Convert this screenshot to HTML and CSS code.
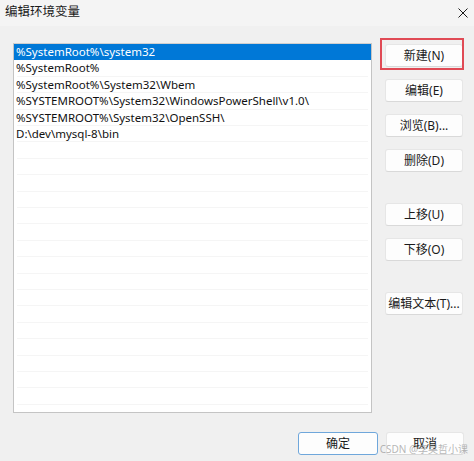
FILE: index.html
```html
<!DOCTYPE html>
<html lang="zh-CN">
<head>
<meta charset="utf-8">
<title>编辑环境变量</title>
<link rel="stylesheet" href="styles.css">
</head>
<body>
<div class="dialog">
  <div class="titlebar">
    <span class="title">编辑环境变量</span>
    <svg class="close" width="10" height="10" viewBox="0 0 10 10"><path d="M0.5 0.5 L9.5 9.5 M9.5 0.5 L0.5 9.5" stroke="#1a1a1a" stroke-width="1" fill="none"/></svg>
  </div>
  <div class="content">
    <div class="list">
      <div class="row selected">%SystemRoot%\system32</div>
      <div class="row">%SystemRoot%</div>
      <div class="row">%SystemRoot%\System32\Wbem</div>
      <div class="row">%SYSTEMROOT%\System32\WindowsPowerShell\v1.0\</div>
      <div class="row">%SYSTEMROOT%\System32\OpenSSH\</div>
      <div class="row">D:\dev\mysql-8\bin</div>
    </div>
    <div class="buttons">
      <button class="btn highlighted">新建(N)</button>
      <button class="btn">编辑(E)</button>
      <button class="btn">浏览(B)...</button>
      <button class="btn">删除(D)</button>
      <button class="btn group-start">上移(U)</button>
      <button class="btn">下移(O)</button>
      <button class="btn group-start">编辑文本(T)...</button>
    </div>
  </div>
  <div class="footer">
    <button class="btn primary">确定</button>
    <button class="btn">取消</button>
    <span class="watermark">CSDN @李昊哲小课</span>
  </div>
</div>
</body>
</html>
```

FILE: styles.css
```css
html, body {
  margin: 0;
  padding: 0;
}
body {
  background: #f0f0f0;
  font-family: "Noto Sans", "Noto Sans CJK SC", sans-serif;
  font-size: 12px;
  color: #1a1a1a;
}
.dialog {
  width: 474px;
  height: 461px;
  display: flex;
  flex-direction: column;
  position: relative;
  overflow: hidden;
}
.titlebar {
  height: 26px;
  display: flex;
  align-items: center;
  justify-content: space-between;
  padding: 0 6px 2px 5px;
  box-sizing: border-box;
  background: #f4f4f4;
}
.title {
  font-size: 12.5px;
  line-height: 16px;
  color: #1a1a1a;
}
.close {
  display: block;
  margin-top: 2px;
}
.content {
  display: flex;
  gap: 13px;
  padding: 17px 0 0 13px;
}
.list {
  width: 359px;
  height: 370px;
  box-sizing: border-box;
  border: 1px solid #c4c4c4;
  border-top-color: #cfcfcf;
  background-color: #ffffff;
  background-image: repeating-linear-gradient(to bottom, transparent 0, transparent 15.4px, #f5f5f5 15.4px, #f5f5f5 16.4px);
  background-size: calc(100% - 6px) 100%;
  background-position: 3px 0;
  background-repeat: no-repeat;
}
.row {
  height: 16.4px;
  line-height: 16.4px;
  padding-left: 2px;
  white-space: nowrap;
  font-size: 11.5px;
  color: #111;
}
.row.selected {
  background: #0078d7;
  color: #ffffff;
}
.buttons {
  display: flex;
  flex-direction: column;
  gap: 12px;
  padding-top: 1px;
  width: 78px;
}
.btn {
  font-family: "Noto Sans", "Noto Sans CJK SC", sans-serif;
  font-size: 12px;
  color: #1a1a1a;
  height: 23px;
  width: 78px;
  padding: 0;
  background: #fdfdfd;
  border: 1px solid #e6e6e6;
  border-bottom-color: #d9d9d9;
  border-radius: 3px;
  box-sizing: border-box;
  line-height: 20px;
  position: relative;
}
.btn.group-start {
  margin-top: 19px;
}
.btn.highlighted::after {
  content: "";
  position: absolute;
  left: -6px;
  right: -2px;
  top: -7px;
  bottom: -4px;
  border: 2px solid #e04a55;
}
.footer {
  display: flex;
  justify-content: flex-end;
  gap: 8px;
  padding: 19px 10px 0 0;
  position: relative;
}
.btn.primary {
  width: 80px;
  border: 1px solid #6fa7db;
  background: #fdfdfd;
}
.watermark {
  position: absolute;
  right: 6px;
  top: 30px;
  font-size: 10px;
  line-height: 12px;
  color: rgba(150, 150, 150, 0.7);
  white-space: nowrap;
}
```
